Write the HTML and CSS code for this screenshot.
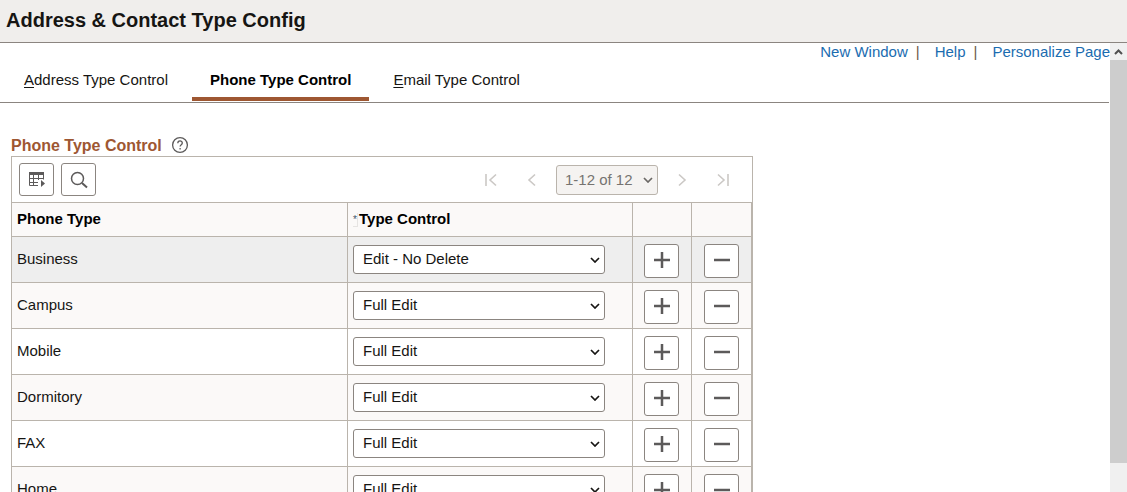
FILE: index.html
```
<!DOCTYPE html>
<html lang="en">

<head>
    <meta charset="UTF-8">
    <meta name="viewport" content="width=device-width, initial-scale=1.0">
    <title>Address &amp; Contact Type Config</title>
    <link rel="stylesheet" href="styles.css">
</head>

<body>

    <!-- Shared icon shapes -->
    <svg class="sprite" aria-hidden="true">
        <symbol id="plus" viewBox="0 0 16 16"><path d="M8 0v16M0 8h16" /></symbol>
        <symbol id="minus" viewBox="0 0 16 16"><path d="M0 8h16" /></symbol>
    </svg>

    <header class="page-header">
        <h1>Address &amp; Contact Type Config</h1>
    </header>

    <div class="page-body">
        <main class="content">
            <div class="page-links">
                <a href="#">New Window</a><span class="bar">|</span>
                <a href="#">Help</a><span class="bar">|</span>
                <a href="#">Personalize Page</a>
            </div>

            <nav class="tabs">
                <a class="tab" href="#"><u>A</u>ddress Type Control</a>
                <a class="tab active" href="#">Phone Type Control</a>
                <a class="tab" href="#"><u>E</u>mail Type Control</a>
            </nav>

            <section class="grid-section">
                <div class="grid-title">
                    <h2>Phone Type Control</h2>
                    <button class="help" type="button" aria-label="Help">
                        <svg width="18" height="18" viewBox="0 0 18 18"><circle cx="9" cy="9" r="7.4" /><path d="M6.8 7.2c0-3 4.5-2.9 4.5-.3 0 1.8-2.2 1.7-2.2 3.7" /><path d="M9.1 12v1.4" /></svg>
                    </button>
                </div>

                <div class="grid-box">
                    <div class="toolbar">
                        <button class="icon-btn" type="button" aria-label="Grid actions">
                            <svg width="18" height="16" viewBox="0 0 18 16"><path class="solid" d="M1 0h15v3H1z" /><path class="thin" d="M1.5 3v10.500H10M5.500 3v10.500M10.500 3v5M15.500 3v4.500M1 6.500h15M1 10.500h9" /><path class="solid" d="M13 8l4 3.500-4 3.500z" /></svg>
                        </button>
                        <button class="icon-btn" type="button" aria-label="Find">
                            <svg width="18" height="18" viewBox="0 0 18 18"><circle cx="7.500" cy="7.500" r="6" /><path class="handle" d="M12 12l5 4.500" /></svg>
                        </button>

                        <div class="pager">
                            <button class="nav-btn" type="button" aria-label="First" disabled><svg width="14" height="14" viewBox="0 0 14 14"><path d="M2 1v12M12 1.500L6 7l6 5.500" /></svg></button>
                            <button class="nav-btn" type="button" aria-label="Previous" disabled><svg width="14" height="14" viewBox="0 0 14 14"><path d="M10 1.500L4 7l6 5.500" /></svg></button>
                            <select class="range" aria-label="Rows shown" disabled><option>1-12 of 12</option></select>
                            <button class="nav-btn" type="button" aria-label="Next" disabled><svg width="14" height="14" viewBox="0 0 14 14"><path d="M4 1.500L10 7l-6 5.500" /></svg></button>
                            <button class="nav-btn" type="button" aria-label="Last" disabled><svg width="14" height="14" viewBox="0 0 14 14"><path d="M12 1v12M2 1.500L8 7l-6 5.500" /></svg></button>
                        </div>
                    </div>

                    <table class="grid">
                        <thead>
                            <tr>
                                <th class="col-type">Phone Type</th>
                                <th class="col-control"><span class="required">*</span>Type Control</th>
                                <th class="col-add"></th>
                                <th class="col-delete"></th>
                            </tr>
                        </thead>
                        <tbody>
                            <tr class="selected">
                                <td><label for="control1">Business</label></td>
                                <td><select class="control" id="control1"><option>Edit - No Delete</option><option>Full Edit</option></select></td>
                                <td class="action"><button class="row-btn" type="button" aria-label="Add row"><svg><use href="#plus" /></svg></button></td>
                                <td class="action"><button class="row-btn" type="button" aria-label="Delete row"><svg><use href="#minus" /></svg></button></td>
                            </tr>
                            <tr>
                                <td><label for="control2">Campus</label></td>
                                <td><select class="control" id="control2"><option>Full Edit</option><option>Edit - No Delete</option></select></td>
                                <td class="action"><button class="row-btn" type="button" aria-label="Add row"><svg><use href="#plus" /></svg></button></td>
                                <td class="action"><button class="row-btn" type="button" aria-label="Delete row"><svg><use href="#minus" /></svg></button></td>
                            </tr>
                            <tr>
                                <td><label for="control3">Mobile</label></td>
                                <td><select class="control" id="control3"><option>Full Edit</option><option>Edit - No Delete</option></select></td>
                                <td class="action"><button class="row-btn" type="button" aria-label="Add row"><svg><use href="#plus" /></svg></button></td>
                                <td class="action"><button class="row-btn" type="button" aria-label="Delete row"><svg><use href="#minus" /></svg></button></td>
                            </tr>
                            <tr>
                                <td><label for="control4">Dormitory</label></td>
                                <td><select class="control" id="control4"><option>Full Edit</option><option>Edit - No Delete</option></select></td>
                                <td class="action"><button class="row-btn" type="button" aria-label="Add row"><svg><use href="#plus" /></svg></button></td>
                                <td class="action"><button class="row-btn" type="button" aria-label="Delete row"><svg><use href="#minus" /></svg></button></td>
                            </tr>
                            <tr>
                                <td><label for="control5">FAX</label></td>
                                <td><select class="control" id="control5"><option>Full Edit</option><option>Edit - No Delete</option></select></td>
                                <td class="action"><button class="row-btn" type="button" aria-label="Add row"><svg><use href="#plus" /></svg></button></td>
                                <td class="action"><button class="row-btn" type="button" aria-label="Delete row"><svg><use href="#minus" /></svg></button></td>
                            </tr>
                            <tr>
                                <td><label for="control6">Home</label></td>
                                <td><select class="control" id="control6"><option>Full Edit</option><option>Edit - No Delete</option></select></td>
                                <td class="action"><button class="row-btn" type="button" aria-label="Add row"><svg><use href="#plus" /></svg></button></td>
                                <td class="action"><button class="row-btn" type="button" aria-label="Delete row"><svg><use href="#minus" /></svg></button></td>
                            </tr>
                        </tbody>
                    </table>
                </div>
            </section>
        </main>

        <div class="scrollbar" aria-hidden="true">
            <div class="scroll-up"><svg width="9" height="6" viewBox="0 0 9 6"><path d="M1 5l3.500-3.500L8 5" /></svg></div>
            <div class="scroll-thumb"></div>
            <div class="scroll-rest"></div>
        </div>
    </div>

</body>

</html>
```
FILE: styles.css
```
/* General Styles */
* {
    margin: 0;
    padding: 0;
    box-sizing: border-box;
}

body {
    display: flex;
    flex-direction: column;
    height: 100vh;
    overflow: hidden;
    background: #fff;
    color: #161513;
    font-family: Arial, "Liberation Sans", sans-serif;
    font-size: 15px;
    line-height: 18px;
}

button, select {
    font-family: inherit;
    font-size: 15px;
}

a {
    text-decoration: none;
}

svg {
    display: block;
    fill: none;
    stroke: #5c5a5a;
}

.sprite {
    position: absolute;
    width: 0;
    height: 0;
}

/* Header */
.page-header {
    flex: none;
    padding: 8px 6px 10px;
    background: #f0eeec;
    border-bottom: 1px solid #8b8580;
}

h1 {
    font-size: 20px;
    line-height: 24px;
}

.page-body {
    display: flex;
    flex: 1;
    min-height: 0;
}

.content {
    flex: 1;
    min-width: 0;
    overflow: hidden;
}

/* Page links */
.page-links {
    display: flex;
    justify-content: flex-end;
}

.page-links a {
    color: #1a6cb0;
}

.bar {
    margin: 0 15px 0 8px;
    color: #6b5a48;
}

/* Tabs */
.tabs {
    display: flex;
    gap: 6px;
    padding: 0 6px 1px;
    margin-right: 1px;
    border-bottom: 1px solid #8b8580;
}

.tab {
    padding: 10px 18px 8px;
    border-bottom: 4px solid transparent;
    color: #161513;
    white-space: nowrap;
}

.tab u {
    text-underline-offset: 2px;
}

.tab.active {
    border-color: #9e5732;
    color: #000;
    font-weight: bold;
}

/* Grid title */
.grid-section {
    padding: 33px 11px 0;
}

.grid-title {
    display: flex;
    align-items: flex-start;
    gap: 9px;
    height: 20px;
}

h2 {
    color: #9e5732;
    font-size: 16px;
    line-height: 20px;
}

.help {
    height: 18px;
    background: none;
    border: none;
}

.help svg {
    stroke-width: 1.3;
}

/* Grid */
.grid-box {
    width: fit-content;
    border: 1px solid #bab4ac;
}

.toolbar {
    display: flex;
    align-items: center;
    gap: 7px;
    padding: 6px 17px 6px 7px;
    border-bottom: 1px solid #bab4ac;
}

.icon-btn, .row-btn {
    display: inline-flex;
    align-items: center;
    justify-content: center;
    width: 35px;
    height: 34px;
    background: #fff;
    border: 1px solid #8b8580;
    border-radius: 3px;
    vertical-align: top;
}

.toolbar .icon-btn {
    height: 33px;
}

.icon-btn svg {
    stroke-width: 1.5;
}

.solid {
    fill: #5c5a5a;
    stroke: none;
}

.thin {
    stroke-width: 1;
}

.handle {
    stroke-width: 2;
}

.pager {
    display: flex;
    align-items: center;
    gap: 17px;
    height: 30px;
    margin-left: auto;
}

.nav-btn {
    padding: 5px;
    background: none;
    border: none;
}

.nav-btn svg {
    stroke: #cbc8c5;
    stroke-width: 1.6;
}

.range, .control {
    appearance: none;
    border: 1px solid #8b8580;
    border-radius: 3px;
    padding: 0 9px 2px;
    background: #fff url("data:image/svg+xml,%3Csvg xmlns='http://www.w3.org/2000/svg' width='10' height='6'%3E%3Cpath d='M1 1l4 4 4-4' fill='none' stroke='%23161513' stroke-width='1.7'/%3E%3C/svg%3E") no-repeat right 4px center;
}

.range {
    width: 102px;
    height: 30px;
    margin: 0 -5px;
    padding: 0 8px;
    background-color: #f5f3f1;
    background-image: url("data:image/svg+xml,%3Csvg xmlns='http://www.w3.org/2000/svg' width='10' height='6'%3E%3Cpath d='M1 1l4 4 4-4' fill='none' stroke='%236b6865' stroke-width='1.7'/%3E%3C/svg%3E");
    border-color: #bab4ac;
    color: #767370;
    opacity: 1;
}

.control {
    display: block;
    width: 252px;
    height: 29px;
    color: #161513;
}

.grid {
    table-layout: fixed;
    width: 740px;
    border-collapse: separate;
    border-spacing: 0;
}

.grid th, .grid td {
    padding: 0 5px;
    border-right: 1px solid #bab4ac;
    border-bottom: 1px solid #bab4ac;
    text-align: left;
}

.grid th {
    height: 34px;
    padding-bottom: 2px;
    background: #fbf9f8;
    color: #000;
}

.grid td {
    height: 46px;
}

.grid td label {
    display: block;
    padding-bottom: 2px;
}

.grid tbody tr:nth-child(even) {
    background: #fbf9f8;
}

.grid tbody .selected {
    background: #eeeeee;
}

.col-type {
    width: 336px;
}

.col-control {
    width: 285px;
}

.col-add {
    width: 59px;
}

.grid .action {
    padding: 7px 0 4px 11px;
}

.grid .action:last-child {
    padding-left: 12px;
}

.row-btn {
    padding-bottom: 2px;
}

.row-btn svg {
    width: 16px;
    height: 16px;
    stroke-width: 2.5;
}

.required {
    display: inline-block;
    width: 5px;
    height: 14px;
    margin-right: 1px;
    border-right: 1px solid #e6e4e2;
    border-bottom: 1px solid #e6e4e2;
    color: #41576b;
    font-size: 10px;
    font-weight: normal;
    line-height: 14px;
    vertical-align: middle;
}

/* Scrollbar */
.scrollbar {
    display: flex;
    flex: none;
    flex-direction: column;
    width: 17px;
    background: #f0f0f0;
}

.scroll-up {
    display: flex;
    align-items: center;
    justify-content: center;
    height: 17px;
}

.scroll-up svg {
    stroke: #505050;
    stroke-width: 2;
}

.scroll-thumb {
    flex: 14;
    background: #cdcdcd;
}

.scroll-rest {
    flex: 1;
}
```
